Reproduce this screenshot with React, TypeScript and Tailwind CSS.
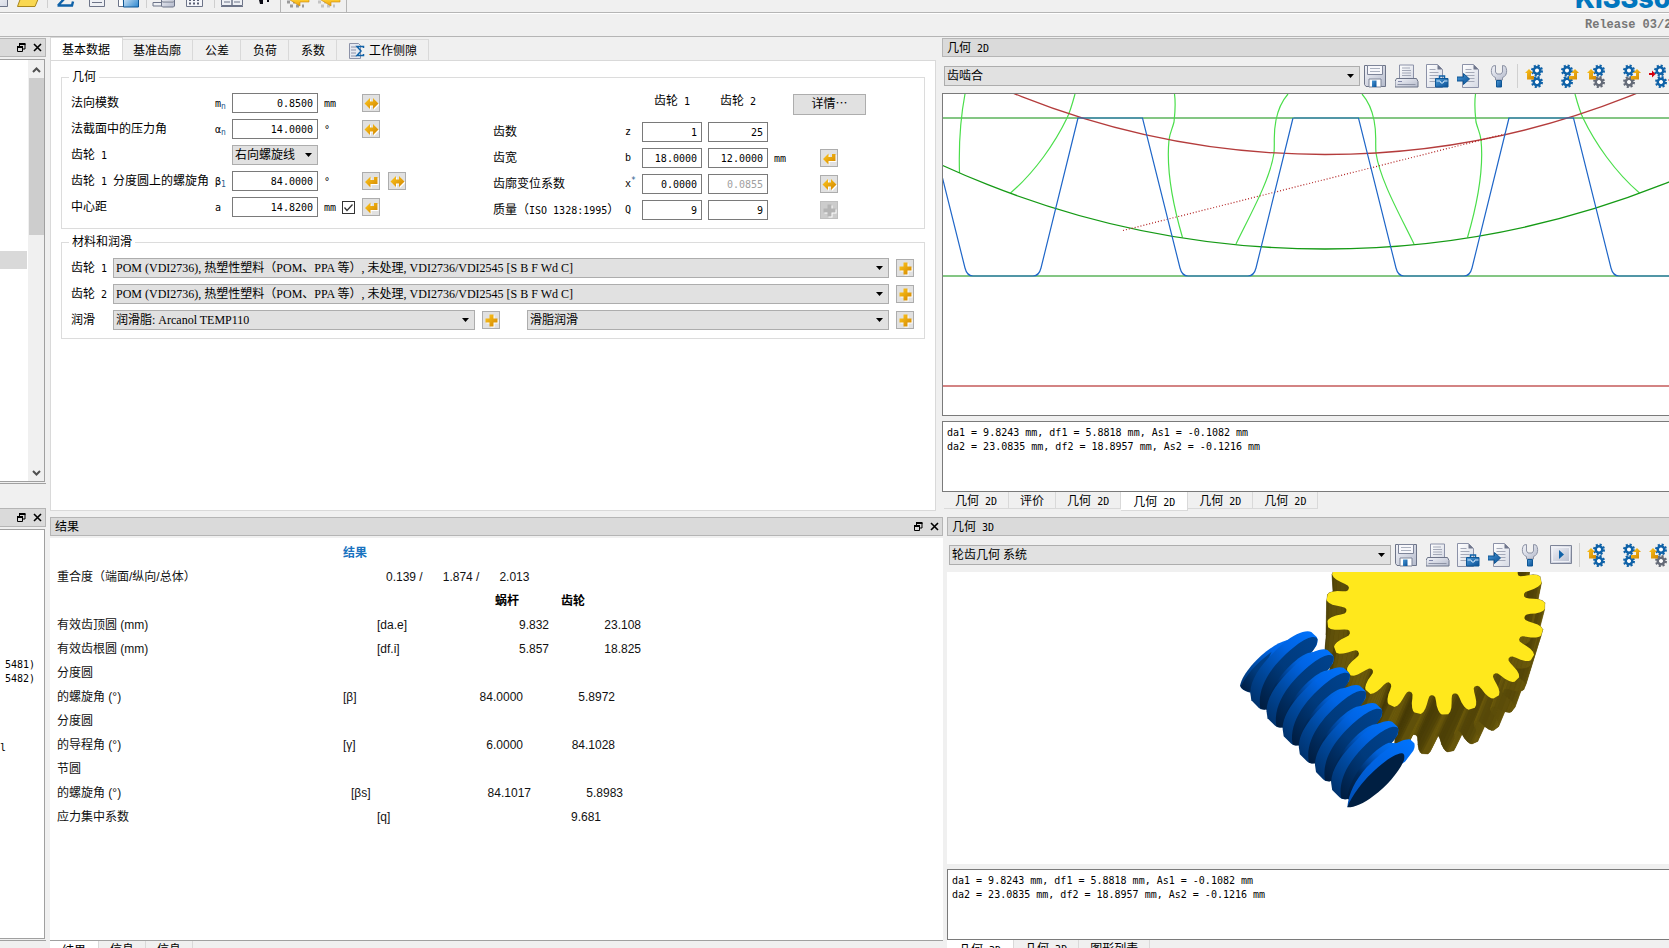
import { ReactNode, useState } from "react";
import clsx from "clsx";

const CJK = "font-['Liberation_Sans','Noto_Sans_CJK_SC',sans-serif]";
const MONO = "font-['DejaVu_Sans_Mono','Noto_Sans_CJK_SC',monospace] text-[10px]";

// ─── Text ─────────────────────────────────────────────────────────────────────

// Latin runs are half the width of a Chinese character
function Txt({ children }: { children: string }) {
  const parts = children.split(/([\x20-\x7e°]+)/).filter(Boolean);
  return (
    <span className="whitespace-pre">
      {parts.map((part, i) =>
        /^[\x20-\x7e°]/.test(part) ? (
          <span key={i} className={MONO}>{part}</span>
        ) : (
          part
        )
      )}
    </span>
  );
}

// ─── Small icons ──────────────────────────────────────────────────────────────

type ButtonIcon = "size" | "return" | "plus" | "plusOff";

const buttonPaths: Record<ButtonIcon, string> = {
  size: "M.5 7.500 6 2v3.500h3V2l5.500 5.500L9 13V9.500H6V13Z",
  return: "M1 8 6.500 2.500V6H10V3h3.500v7h-7v3.500Z",
  plus: "M5.500 1.500h4v4h4v4h-4v4h-4v-4h-4v-4h4Z",
  plusOff: "M5.500 1.500h4v4h4v4h-4v4h-4v-4h-4v-4h4Z",
};

function IconButton({ icon, label }: { icon: ButtonIcon; label: string }) {
  const off = icon === "plusOff";
  return (
    <button
      type="button"
      aria-label={label}
      disabled={off}
      className={clsx(
        "flex size-[18px] shrink-0 items-center justify-center border",
        off ? "border-[#bfbfbf] bg-[#cccccc]" : "border-[#adadad] bg-[#e1e1e1]"
      )}
    >
      <svg viewBox="0 0 15 15" className="size-[15px] shrink-0">
        <path d={buttonPaths[icon]} fill="#fff" transform="translate(1 1)" />
        <path d={buttonPaths[icon]} fill={off ? "#b4b4b4" : "url(#gold)"} />
      </svg>
    </button>
  );
}

function RestoreIcon() {
  return (
    <svg viewBox="0 0 9 9" className="size-[9px]" fill="none" stroke="#000">
      <path d="M2.500 3V1h5.500v5H6" />
      <path d="M2 1h6.500" strokeWidth="2" />
      <path d="M.5 4h5v4.500h-5Z" />
      <path d="M0 4h6" strokeWidth="2" />
    </svg>
  );
}

function CloseIcon() {
  return (
    <svg viewBox="0 0 9 9" className="size-[9px]" stroke="#000" strokeWidth="1.600">
      <path d="M1 1l7 7M8 1 1 8" />
    </svg>
  );
}

// ─── View toolbar icons ───────────────────────────────────────────────────────

function Gear({ x, y, color }: { x: number; y: number; color: string }) {
  return (
    <g transform={`translate(${x} ${y})`}>
      <circle r="4.800" fill="none" stroke={color} strokeWidth="2.400" strokeDasharray="2 1.770" />
      <circle r="3.200" fill="none" stroke={color} strokeWidth="2.600" />
      <circle r="1.800" fill="#fff" />
    </g>
  );
}

const BLUE = "#0f62a8";
const GREY = "#656b78";

function SheetShape() {
  return (
    <>
      <path d="M0 0h11l5 5v18H0Z" fill="url(#paper)" stroke="#8c92a8" />
      <path d="M11 0v5h5Z" fill="#70778c" />
      <path d="M3 5h6M3 8h9M3 11h9M3 14h9M3 17h9" stroke="#a4a9b8" />
    </>
  );
}

const viewIcons: Record<string, ReactNode> = {
  保存: (
    <>
      <path d="M.5 1.500h21v21H2l-1.500-2Z" fill="url(#metal)" stroke="#6d7488" />
      <path d="M3.500 1.500h15v9h-15Z" fill="#f7f7fb" stroke="#7d8498" />
      <path d="M6 4.500h10M6 7.500h10" stroke="#aab0be" />
      <path d="M5 15h12v8H5Z" fill="#fff" stroke="#7d8498" />
      <path d="M8 16.500h4.500V23H8Z" fill="url(#blue)" />
    </>
  ),
  打印: (
    <>
      <path d="M4.500 1h14v14h-14Z" fill="url(#paper)" stroke="#8c92a8" />
      <path d="M7 4h8M7 6.500h9M7 9h9M7 11.500h9" stroke="#a4a9b8" />
      <path d="M1.500 14.500h20l1.500 3v5.500H0v-5.500Z" fill="url(#metal)" stroke="#6d7488" />
      <path d="M3.500 17.500h3" stroke="#222c66" strokeDasharray="1 1" />
      <path d="M2.500 20.500h18" stroke="#8d93a5" />
    </>
  ),
  锁定: (
    <>
      <g transform="translate(.500 .500)"><SheetShape /></g>
      <path d="M13.500 15v-3h5v3" fill="none" stroke="#0f62a8" strokeWidth="1.500" />
      <path d="M9.500 14.500h12.500V23H9.500Z" fill="url(#blue)" stroke="#0f5795" />
      <path d="M10.500 17h3.500l1 2h2l1-2h3.500" fill="none" stroke="#cfe6fa" />
    </>
  ),
  导出: (
    <>
      <g transform="translate(5.500 .500)"><SheetShape /></g>
      <path d="M0 13h6.500V9.500l6 5.500-6 5.500V17H0Z" fill="url(#blue)" stroke="#0f5795" />
    </>
  ),
  设置: (
    <>
      <path d="M5 2C2.500 5 2.500 12 7.500 13.500V16h7v-2.500C19.500 12 19.500 5 17 2l-2.500-.500v6.500l-1.500 2H9L7.500 8V1.500Z" fill="url(#metal)" stroke="#8d93a5" />
      <path d="M8.500 16.500h5v6.500h-5Z" fill="url(#blue)" stroke="#0f5795" />
    </>
  ),
  播放: (
    <>
      <path d="M.5 2.500h21v18H.5Z" fill="url(#metal)" stroke="#7d8498" />
      <path d="M2.500 4.500h17v14h-17Z" fill="none" stroke="#eef0f6" />
      <path d="M9 7l5 4.500-5 4.500Z" fill={BLUE} />
    </>
  ),
  左转: (
    <>
      <Gear x={13} y={6.5} color={BLUE} />
      <Gear x={13} y={18} color={BLUE} />
      <path d="M10 15.500H3V9H1l4-4 4 4H7v3h3Z" fill="url(#gold)" />
    </>
  ),
  右转: (
    <>
      <Gear x={12} y={6.5} color={BLUE} />
      <Gear x={12} y={18} color={BLUE} />
      <path d="M14 15.500h8V9h2l-4-4-4 4h3v3h-5Z" fill="url(#gold)" />
    </>
  ),
  左转一: (
    <>
      <Gear x={13} y={6.5} color={BLUE} />
      <Gear x={13} y={18} color={GREY} />
      <path d="M10 15.500H3V9H1l4-4 4 4H7v3h3Z" fill="url(#gold)" />
    </>
  ),
  右转一: (
    <>
      <Gear x={12} y={6.5} color={BLUE} />
      <Gear x={12} y={18} color={GREY} />
      <path d="M14 15.500h8V9h2l-4-4-4 4h3v3h-5Z" fill="url(#gold)" />
    </>
  ),
  接触: (
    <>
      <Gear x={12} y={6.5} color={BLUE} />
      <Gear x={13} y={18} color={BLUE} />
      <path d="M1 9h3V6.500L7.500 10 4 13.500V11H1ZM24 13v6l-4-3Z" fill="#d4000f" />
    </>
  ),
};

function ViewToolbar({ value, options, play }: { value: string; options: string[]; play?: boolean }) {
  const files = ["保存", "打印", "锁定", "导出", "设置", ...(play ? ["播放"] : [])];
  const gears = ["左转", "右转", "左转一", ...(play ? [] : ["右转一", "接触"])];
  return (
    <div className="flex h-9 shrink-0 items-center overflow-hidden pt-[2px] pl-[2px]">
      <Select label="视图" options={options} value={value} className="min-w-0 flex-1" />
      <div className="ml-1 flex shrink-0 gap-[7px]">
        {files.map((name) => <ViewButton key={name} name={name} />)}
      </div>
      <div className="mr-[6px] ml-[5px] h-6 w-px shrink-0 bg-[#d0d0d0]" />
      <div className="-mr-[3px] flex shrink-0 gap-[7px]">
        {gears.map((name) => <ViewButton key={name} name={name} />)}
      </div>
    </div>
  );
}

function ViewButton({ name }: { name: string }) {
  return (
    <button type="button" aria-label={name} className="size-6 shrink-0">
      <svg viewBox="0 0 24 24" className="size-6">{viewIcons[name]}</svg>
    </button>
  );
}

// ─── Form controls ────────────────────────────────────────────────────────────

interface SelectProps {
  label?: string;
  id?: string;
  value: string;
  options?: string[];
  className?: string;
}

function Select({ label, id, value, options = [value], className }: SelectProps) {
  return (
    <div className={clsx("relative h-5", className)}>
      <select
        id={id}
        aria-label={label}
        defaultValue={value}
        className="block h-5 w-full appearance-none border border-[#adadad] bg-[#e1e1e1] pr-5 pl-[2px] font-['Liberation_Serif','Noto_Sans_CJK_SC',serif] text-[12px] leading-[18px] text-black"
      >
        {options.map((o) => <option key={o}>{o}</option>)}
      </select>
      <svg viewBox="0 0 7 4" className="pointer-events-none absolute top-2 right-[6px] h-1 w-[7px]">
        <path d="M0 0h7L3.500 4Z" />
      </svg>
    </div>
  );
}

function NumberInput({ id, value, label, disabled }: { id: string; value: string; label?: string; disabled?: boolean }) {
  return (
    <input
      id={id}
      aria-label={label}
      type="text"
      inputMode="decimal"
      defaultValue={value}
      disabled={disabled}
      className={clsx(
        MONO,
        "h-5 min-w-0 border border-[#7a7a7a] bg-white pr-1 text-right",
        disabled ? "text-[#a0a0a0]" : "text-black"
      )}
    />
  );
}

function Symbol({ base, sub, sup }: { base: string; sub?: string; sup?: string }) {
  return (
    <span className={clsx(MONO, "whitespace-nowrap")}>
      {base}
      {sub && <sub className="text-[8px] text-[#2a5a8a]">{sub}</sub>}
      {sup && <sup className="text-[8px] text-[#2a5a8a]">{sup}</sup>}
    </span>
  );
}

// ─── Docks and tabs ───────────────────────────────────────────────────────────

function DockTitle({ title, buttons }: { title?: string; buttons?: boolean }) {
  return (
    <div
      className={clsx(
        "flex h-[19px] shrink-0 items-center justify-between border border-[#b5b5b5] bg-[#dadada] pl-1",
        !buttons && "border-r-0"
      )}
    >
      <h2 className="pt-[2px] leading-[15px]">{title && <Txt>{title}</Txt>}</h2>
      {buttons && (
        <div className="mr-[3px] flex gap-[7px]">
          <button type="button" aria-label="还原"><RestoreIcon /></button>
          <button type="button" aria-label="关闭"><CloseIcon /></button>
        </div>
      )}
    </div>
  );
}

function BottomTabs({ tabs, initial }: { tabs: string[]; initial: number }) {
  const [active, setActive] = useState(initial);
  return (
    <div className="flex items-start" role="tablist">
      {tabs.map((t, i) => (
        <button
          key={i}
          type="button"
          role="tab"
          aria-selected={i === active}
          onClick={() => setActive(i)}
          className={clsx(
            "border-r border-b border-[#d9d9d9]",
            i === active ? "h-[19px] bg-white px-3 pt-[2px]" : "h-[17px] bg-[#f0f0f0] px-[11px] pt-px"
          )}
        >
          <Txt>{t}</Txt>
        </button>
      ))}
    </div>
  );
}

function Report() {
  return (
    <div className="h-[71px] shrink-0 border border-r-0 border-[#7a7a7a] bg-white pt-[3px] pl-1 leading-[14px]">
      <p className="h-[14px]"><Txt>da1 = 9.8243 mm, df1 = 5.8818 mm, As1 = -0.1082 mm</Txt></p>
      <p className="h-[14px]"><Txt>da2 = 23.0835 mm, df2 = 18.8957 mm, As2 = -0.1216 mm</Txt></p>
    </div>
  );
}

// ─── Main toolbar ─────────────────────────────────────────────────────────────

// Only the lower 8 pixels of the toolbar icons are on screen
const mainIcons: Record<string, ReactNode> = {
  新建: <path d="M4-8h18.500V6.500H4" fill="url(#paper)" stroke="#6d7488" />,
  打开: <path d="M1.500 6.500 5-3h18l-4 9.500Z" fill="#f9d750" stroke="#a8851c" />,
  计算: <path d="M5 5.500 12-2M4.500 5.500h14.500l1-4" fill="none" stroke={BLUE} strokeWidth="2.400" />,
  报告: <path d="M5.500-8h15V6.500h-15ZM8-.500h10M8 2.500h10" fill="#eef0f4" stroke="#6d7488" />,
  窗口: (
    <>
      <path d="M3.500-8v14.500H9" fill="#fff" stroke="#6d7488" />
      <path d="M8.500-8h15V7h-15Z" fill="url(#blueSoft)" stroke="#0f5795" />
    </>
  ),
  数据库: (
    <>
      <path d="M2-.500h8M1 2.500h9v3.500H1Z" fill="#eef0f4" stroke="#6d7488" />
      <path d="M9.500-6h13V6l-1 1h-11l-1-1ZM9.500 1l1 1h11l1-1" fill="url(#metal)" stroke="#6d7488" />
    </>
  ),
  计算器: (
    <>
      <path d="M3.500-8h16V6.500h-16Z" fill="#f4f5f9" stroke="#6d7488" />
      <path d="M6 0h12M6 3.500h12" stroke="#5a6074" strokeWidth="2" strokeDasharray="2 2" />
    </>
  ),
  手册: <path d="M1.500-8H12V5.500H1.500ZM12-8h10.500v13.500H12ZM4-1h6M4 2h6M14-1h6M14 2h6M1 6.500h22" fill="#eef0f4" stroke="#6d7488" />,
  帮助: <path d="M8 0h4v4h-3ZM16 0h2v2h-2Z" fill="#0a0a14" />,
};

function arrowIcon(scatter: boolean) {
  return (
    <>
      <path d="M1 2h8M4 6h14" stroke={scatter ? "#c4c4c4" : "#9a9a9a"} strokeWidth="3" strokeDasharray="3 3" />
      <path d="M4 0 4.500-1 23-1V2H14v4Z" fill="url(#goldBar)" stroke="#c98a0a" strokeWidth=".6" />
    </>
  );
}

function MainButton({ name, children }: { name: string; children: ReactNode }) {
  return (
    <button type="button" aria-label={name} className="h-2 w-6 shrink-0">
      <svg viewBox="0 0 24 8" className="h-2 w-6">{children}</svg>
    </button>
  );
}

function MainToolbar() {
  const groups = [["新建", "打开"], ["计算", "报告", "窗口"], ["数据库", "计算器"], ["手册", "帮助"]];
  return (
    <header className="shrink-0 overflow-hidden">
      <div className="flex h-[13px] items-start border-b border-[#b5b5b5]">
        <div className="-ml-[15px] flex">
          {groups.map((group, i) => (
            <div key={i} className="flex">
              {i > 0 && <div className="mr-[5px] ml-[7px] h-2 w-px bg-[#cfcfcf]" />}
              <div className="flex gap-[7px]">
                {group.map((name) => <MainButton key={name} name={name}>{mainIcons[name]}</MainButton>)}
              </div>
            </div>
          ))}
        </div>
        <div className="ml-[5px] flex h-3 gap-[7px] border-x border-[#b5b5b5] px-[5px]">
          <MainButton name="撤销">{arrowIcon(false)}</MainButton>
          <MainButton name="重做">{arrowIcon(true)}</MainButton>
        </div>
        <div className="ml-auto flex h-2 w-[94px] items-end overflow-hidden font-['Inter'] text-[27px] leading-[18px] font-extrabold text-[#0076be]">
          <span>KISSsoft</span>
        </div>
      </div>
      <div className="flex h-6 items-center justify-end overflow-hidden border-t border-b border-t-white border-b-[#b5b5b5]">
        <span className="w-[84px] font-['Liberation_Mono'] text-[12px] font-bold whitespace-nowrap text-[#777777]">Release 03/2</span>
      </div>
    </header>
  );
}

// ─── Basic data page ──────────────────────────────────────────────────────────

function PageTabs() {
  const tabs = ["基本数据", "基准齿廓", "公差", "负荷", "系数", "工作侧隙"];
  return (
    <div role="tablist" className="-mb-px flex h-6 shrink-0 items-end">
      {tabs.map((t, i) => (
        <button
          key={t}
          type="button"
          role="tab"
          aria-selected={i === 0}
          className={clsx(
            "flex items-center gap-1 border-t border-r border-[#d9d9d9]",
            i === 0 ? "h-6 border-l bg-white pr-3 pl-[11px]" : "h-[22px] border-b bg-[#f0f0f0] pt-px pr-[11px]",
            i === 1 && "pl-[10px]",
            i > 1 && "pl-3"
          )}
        >
          {i === 5 && (
            <svg viewBox="0 0 16 16" className="size-4">
              <path d="M.5.5h9l2 2V15.500H.5Z" fill="#e6e9f1" stroke="#8c92a8" />
              <path d="M2 4h6M2 7h5M2 10h5M2 13h6" stroke="#8c92a8" />
              <path d="M14.500 5V3.500H8l4 4.500-4 4.500h6.500V11" fill="none" stroke={BLUE} strokeWidth="1.500" />
            </svg>
          )}
          {t}
        </button>
      ))}
    </div>
  );
}

interface LeftRow {
  id: string;
  label: string;
  base?: string;
  sub?: string;
  value: string;
  unit?: string;
  icons: ButtonIcon[];
  check?: boolean;
}

const leftRows: LeftRow[] = [
  { id: "mn", label: "法向模数", base: "m", sub: "n", value: "0.8500", unit: "mm", icons: ["size"] },
  { id: "alpha", label: "法截面中的压力角", base: "α", sub: "n", value: "14.0000", unit: "°", icons: ["size"] },
  { id: "helix", label: "齿轮 1", value: "右向螺旋线", icons: [] },
  { id: "beta", label: "齿轮 1 分度圆上的螺旋角", base: "β", sub: "1", value: "84.0000", unit: "°", icons: ["return", "size"] },
  { id: "a", label: "中心距", base: "a", value: "14.8200", unit: "mm", icons: ["return"], check: true },
];

const rightRows = [
  { id: "z", label: "齿数", base: "z", values: ["1", "25"] },
  { id: "b", label: "齿宽", base: "b", values: ["18.0000", "12.0000"], unit: "mm", icon: "return" as ButtonIcon },
  { id: "x", label: "齿廓变位系数", base: "x", sup: "*", values: ["0.0000", "0.0855"], icon: "size" as ButtonIcon },
  { id: "q", label: "质量（ISO 1328:1995）", base: "Q", values: ["9", "9"], icon: "plusOff" as ButtonIcon },
];

function GeometryGroup() {
  return (
    <fieldset className="border border-[#dcdcdc] px-[7px] pb-2">
      <legend className="h-4 px-[3px] leading-4">几何</legend>
      <div className="flex gap-[87px] pt-2 pl-[2px]">
        <div className="flex shrink-0 flex-col gap-[6px]">
          {leftRows.map((r) => (
            <div key={r.id} className="grid h-5 grid-cols-[144px_17px_86px_24px_20px_26px_18px] items-center">
              <label htmlFor={r.id}><Txt>{r.label}</Txt></label>
              <span>{r.base && <Symbol base={r.base} sub={r.sub} />}</span>
              {r.base ? (
                <NumberInput id={r.id} value={r.value} />
              ) : (
                <Select id={r.id} value={r.value} options={["右向螺旋线", "左向螺旋线"]} />
              )}
              <span className="pl-[6px]">{r.unit && <Txt>{r.unit}</Txt>}</span>
              {r.check ? (
                <label className="relative block size-[13px]">
                  <input type="checkbox" defaultChecked aria-label="固定中心距" className="peer block size-[13px] appearance-none border border-[#333] bg-white" />
                  <svg viewBox="0 0 13 13" className="pointer-events-none absolute inset-0 hidden size-[13px] peer-checked:block">
                    <path d="M2.500 6.500 5 9.500l5.500-6" fill="none" stroke="#333" strokeWidth="1.300" />
                  </svg>
                </label>
              ) : (
                <span />
              )}
              {r.icons.map((icon) => <IconButton key={icon} icon={icon} label={`${r.label} ${icon}`} />)}
            </div>
          ))}
        </div>
        <div className="flex flex-col gap-[6px]">
          <div className="grid h-[23px] grid-cols-[132px_17px_66px_60px_25px_73px]">
            <span className="col-start-3 pl-3 leading-4"><Txt>齿轮 1</Txt></span>
            <span className="pl-3 leading-4"><Txt>齿轮 2</Txt></span>
            <button type="button" className="col-start-6 mt-px h-[21px] border border-[#adadad] bg-[#e1e1e1] leading-[19px]">详情⋯</button>
          </div>
          {rightRows.map((r) => (
            <div key={r.id} className="grid h-5 grid-cols-[132px_17px_60px_66px_52px_18px] items-center">
              <label htmlFor={`${r.id}1`} className="whitespace-nowrap"><Txt>{r.label}</Txt></label>
              <Symbol base={r.base} sup={r.sup} />
              <NumberInput id={`${r.id}1`} value={r.values[0]} />
              <div className="flex pl-[6px]">
                <NumberInput id={`${r.id}2`} label={`${r.label} 齿轮 2`} value={r.values[1]} disabled={r.id === "x"} />
              </div>
              <span className="pl-[6px]">{r.unit && <Txt>{r.unit}</Txt>}</span>
              {r.icon && <IconButton icon={r.icon} label={`${r.label} ${r.icon}`} />}
            </div>
          ))}
        </div>
      </div>
    </fieldset>
  );
}

const POM = "POM (VDI2736), 热塑性塑料（POM、PPA 等）, 未处理, VDI2736/VDI2545 [S B F Wd C]";

function MaterialGroup() {
  return (
    <fieldset className="mt-[5px] border border-[#dcdcdc] px-[7px] pb-2">
      <legend className="h-4 px-[3px] leading-4">材料和润滑</legend>
      <div className="flex flex-col gap-[6px] pt-2 pr-[3px] pl-[2px]">
        {["齿轮 1", "齿轮 2"].map((name, i) => (
          <div key={name} className="flex items-center">
            <label htmlFor={`mat${i}`} className="w-[42px] shrink-0"><Txt>{name}</Txt></label>
            <Select id={`mat${i}`} value={POM} className="min-w-0 flex-1" />
            <div className="ml-[7px]"><IconButton icon="plus" label={`${name} 材料`} /></div>
          </div>
        ))}
        <div className="flex items-center">
          <label htmlFor="lub" className="w-[42px] shrink-0">润滑</label>
          <Select id="lub" value="润滑脂: Arcanol TEMP110" className="min-w-0 flex-1" />
          <div className="mr-[27px] ml-[7px]"><IconButton icon="plus" label="润滑剂" /></div>
          <Select label="润滑方式" value="滑脂润滑" className="min-w-0 flex-1" />
          <div className="ml-[7px]"><IconButton icon="plus" label="润滑方式设置" /></div>
        </div>
      </div>
    </fieldset>
  );
}

// ─── Results ──────────────────────────────────────────────────────────────────

interface ResultRow {
  label: string;
  symbol?: string;
  v1?: string;
  v2?: string;
  indent?: "none" | "small" | "large" | "single";
}

const resultRows: ResultRow[] = [
  { label: "有效齿顶圆 (mm)", symbol: "[da.e]", v1: "9.832", v2: "23.108", indent: "large" },
  { label: "有效齿根圆 (mm)", symbol: "[df.i]", v1: "5.857", v2: "18.825", indent: "large" },
  { label: "分度圆" },
  { label: "的螺旋角 (°)", symbol: "[β]", v1: "84.0000", v2: "5.8972" },
  { label: "分度圆" },
  { label: "的导程角 (°)", symbol: "[γ]", v1: "6.0000", v2: "84.1028" },
  { label: "节圆" },
  { label: "的螺旋角 (°)", symbol: "[βs]", v1: "84.1017", v2: "5.8983", indent: "small" },
  { label: "应力集中系数", symbol: "[q]", v2: "9.681", indent: "single" },
];

const symbolPad = { none: "", small: "pl-2", large: "pl-[34px]", single: "pl-[34px]" };
const valuePad = { none: "pr-[26px]", small: "pr-[18px]", large: "", single: "pr-10" };

function Results() {
  return (
    <div className="min-h-0 flex-1 overflow-hidden bg-white pt-[3px] pl-[7px] text-[#111]">
      <table className="w-[584px] table-fixed border-collapse text-left">
        <colgroup>
          <col className="w-[286px]" />
          <col className="w-[84px]" />
          <col className="w-[122px]" />
          <col className="w-[92px]" />
        </colgroup>
        <tbody>
          <tr className="h-6">
            <td />
            <th colSpan={3} className="p-0 font-bold text-[#1a73c0]">结果</th>
          </tr>
          <tr className="h-6">
            <td className="p-0">重合度（端面/纵向/总体）</td>
            <td colSpan={3} className="p-0 pl-[43px]">
              <div className="flex gap-5 whitespace-nowrap">
                <span>0.139 /</span>
                <span>1.874 /</span>
                <span>2.013</span>
              </div>
            </td>
          </tr>
          <tr className="h-6 text-black">
            <td />
            <td />
            <th className="p-0 pr-[30px] text-right font-bold">蜗杆</th>
            <th className="p-0 pl-3 font-bold">齿轮</th>
          </tr>
          {resultRows.map((r, i) => {
            const indent = r.indent ?? "none";
            return (
              <tr key={i} className="h-6">
                <td className="p-0">{r.label}</td>
                <td className={clsx("py-0", symbolPad[indent])}>{r.symbol}</td>
                <td className={clsx("py-0 text-right", valuePad[indent])}>{r.v1}</td>
                <td className={clsx("py-0 text-right", valuePad[indent])}>{r.v2}</td>
              </tr>
            );
          })}
        </tbody>
      </table>
    </div>
  );
}

// ─── 2D view ──────────────────────────────────────────────────────────────────

function Flanks() {
  return (
    <g fill="none" stroke="#4ade4a" strokeWidth="1.200">
      <path d="M22 0C18 21 15.500 46 16.500 79" />
      <path d="M132 0C129 11 127 18 124 24C112 49 92 78 67.500 99" />
      <path d="M231.500 0C233 11 232 19 231 28C229 36 227 38 226 46C223 76 230 111 239.500 143.500" />
      <path d="M345 0C338 8 335 16 333 26C330 41 332 46 331 59C327 86 307 121 293 150" />
    </g>
  );
}

function Canvas2D() {
  return (
    <div className="min-h-0 flex-1 overflow-hidden border border-r-0 border-[#7a7a7a] bg-white">
      <svg className="block size-full">
        <path d="M0 24H4000M0 182H4000" stroke="#5cb45c" strokeWidth="1.500" />
        <path d="M0 292H4000" stroke="#c45a5a" strokeWidth="1.500" />
        <Flanks />
        <g transform="translate(764 0) scale(-1 1)"><Flanks /></g>
        <circle cx="382" cy="-761" r="916" fill="none" stroke="#159a15" strokeWidth="1.300" />
        <circle cx="382" cy="-763.500" r="824" fill="none" stroke="#b43c3c" strokeWidth="1.300" />
        <path d="M180 136.500 562 40" stroke="#b02020" strokeWidth="1.200" strokeDasharray="1 2" />
        <g fill="none" stroke="#1f66c8" strokeWidth="1.200">
          {[-215, 0, 216, 431, 647].map((x) => (
            <path key={x} transform={`translate(${x} 0)`} d="M134.500 24H199.500L237 174Q239 182 245 182H305Q311 182 313 174L350 24" />
          ))}
        </g>
      </svg>
    </div>
  );
}

// ─── 3D view ──────────────────────────────────────────────────────────────────

type Point = [number, number];

const toothProfile: Point[] = [
  [268, -7.2], [269, -6.2], [274, -5.3], [285, -4.8], [300, -4.4], [314, -3.6], [323, -2.7], [327, -1.8],
  [328, 1.6], [321, 2.8], [310, 3.7], [296, 4.3], [282, 4.8], [272, 5.4], [268, 6.4],
];

function gearOutline(cx: number, cy: number, scale: number, phase: number): Point[] {
  const points: Point[] = [];
  for (let k = 0; k < 25; k++) {
    for (const [r, offset] of toothProfile) {
      const a = ((phase + k * 14.4 + offset) * Math.PI) / 180;
      points.push([cx + r * scale * Math.sin(a), cy + r * scale * 0.975 * Math.cos(a)]);
    }
  }
  return points;
}

function toPoints(points: Point[]) {
  return points.map((p) => `${p[0].toFixed(1)},${p[1].toFixed(1)}`).join(" ");
}

const frontFace = gearOutline(707, 235, 1, 5);
const backFace = gearOutline(683, 370, 0.945, -1.5);

function GearWheel() {
  return (
    <g>
      <polygon points={toPoints(backFace)} fill="#4e4207" />
      {frontFace.map((p, i) => {
        const j = (i + 1) % frontFace.length;
        const q = frontFace[j];
        const nx = q[1] - p[1];
        const ny = p[0] - q[0];
        const len = Math.hypot(nx, ny) || 1;
        // walls are lit from the lower right
        const light = 0.5 + 0.5 * ((-nx * 0.75 - ny * 0.5) / len);
        const fill = `rgb(${Math.round(66 + light * 44)},${Math.round(55 + light * 37)},${Math.round(5 + light * 7)})`;
        return <polygon key={i} points={toPoints([p, q, backFace[j], backFace[i]])} fill={fill} stroke={fill} />;
      })}
      <polygon points={toPoints(frontFace)} fill="#ffe81c" />
    </g>
  );
}

function Thread({ k, last }: { k: number; last?: boolean }) {
  return (
    <g transform={`translate(${k * 48.500} ${k * 53.800})`}>
      <path d="M151 490C150 440 200 384 250 340C285 310 318 299 334 306L350 321Q355 330 350 346L200 537Q185 542 176 533L154 511Z" fill="url(#crest)" />
      <path d="M353 328C348 316 325 318 290 345C228 392 168 465 181 535Q190 541 200 538C228 470 275 410 327 376Q352 352 353 328Z" fill="url(#flank)" />
      <path
        d={last ? "M324 369C280 385 205 465 199 538L206 540L376 420L372 372Z" : "M324 369C280 385 205 465 199 538L210 560L250 570L376 420L372 360Z"}
        fill="url(#core)"
      />
    </g>
  );
}

function Worm() {
  return (
    <g>
      <path d="M120 467C130 420 205 345 262 330L300 325L200 500L146 487Q124 480 120 467Z" fill="url(#crest)" />
      <path d="M122 470C145 420 190 385 215 365L180 440L150 486Q130 482 122 470Z" fill="url(#flank)" />
      {[0, 1, 2, 3, 4, 5].map((k) => <Thread key={k} k={k} last={k === 5} />)}
      <path d="M442 832C446 790 465 752 500 712C545 665 600 625 630 628L643 640Q646 652 640 662Q630 675 615 695L600 705Z" fill="url(#crestEnd)" />
      <path d="M442 832C448 815 460 795 475 775C520 715 580 672 604 670Q616 668 612 690C600 722 560 770 520 798C490 822 460 833 442 832Z" fill="#001f42" />
    </g>
  );
}

function Canvas3D() {
  return (
    <div className="min-h-0 flex-1 overflow-hidden bg-white">
      <svg className="block size-full">
        <g transform="translate(253 -42) scale(.33333)">
          <GearWheel />
          <Worm />
        </g>
      </svg>
    </div>
  );
}

// ─── Shared gradients ─────────────────────────────────────────────────────────

function Gradients() {
  const stops: [string, string[], number[]][] = [
    ["gold", ["#ffc81e", "#d08400"], [0, 0, 1, 1]],
    ["goldBar", ["#ffd23a", "#f0a000"], [0, 0, 0, 1]],
    ["paper", ["#ffffff", "#d5d9e4"], [0, 0, 1, 1]],
    ["metal", ["#f4f5fa", "#b4bacb"], [0, 0, 1, 1]],
    ["blue", ["#4b9ad8", "#0a4f94"], [0, 0, 1, 1]],
    ["blueSoft", ["#ffffff", "#2a86cf"], [0, 0, 1, 1]],
    ["crest", ["#0074ff", "#0064e4", "#00479a", "#002d62"], [1, 0, 0, 1]],
    ["crestEnd", ["#0074ff", "#0062e0", "#004db0"], [1, 0, 0, 1]],
    ["flank", ["#00438f", "#003a7c", "#001b3d"], [1, 0, 0, 1]],
    ["core", ["#0078ff", "#0060d8", "#002a5c", "#001a3a"], [1, 0, 0, 1]],
  ];
  return (
    <svg className="absolute size-0" aria-hidden="true">
      <defs>
        {stops.map(([id, colors, [x1, y1, x2, y2]]) => (
          <linearGradient key={id} id={id} x1={x1} y1={y1} x2={x2} y2={y2}>
            {colors.map((c, i) => <stop key={c} offset={i / (colors.length - 1)} stopColor={c} />)}
          </linearGradient>
        ))}
      </defs>
    </svg>
  );
}

// ─── Layout ───────────────────────────────────────────────────────────────────

function LeftDocks() {
  return (
    <aside className="flex w-[46px] shrink-0 flex-col pt-px">
      <div className="-ml-px flex h-[446px] shrink-0 flex-col border-b border-[#a0a0a0]">
        <DockTitle buttons />
        <div className="mt-[2px] mr-px mb-px flex flex-1 justify-between border border-[#a0a0a0] bg-white">
          <div className="mt-[191px] h-[18px] flex-1 bg-[#d9d9d9]" />
          <div className="ml-px flex w-4 flex-col items-center bg-[#f0f0f0]">
            <svg viewBox="0 0 15 18" className="h-[18px] w-[15px]" fill="none" stroke="#505050" strokeWidth="2">
              <path d="M4 12l3.500-3.500L11 12" />
            </svg>
            <div className="h-[157px] w-[15px] bg-[#cdcdcd]" />
            <svg viewBox="0 0 15 18" className="mt-auto h-[18px] w-[15px]" fill="none" stroke="#505050" strokeWidth="2">
              <path d="M4 8l3.500 3.500L11 8" />
            </svg>
          </div>
        </div>
      </div>
      <div className="mt-6 mb-[7px] -ml-px flex min-h-0 flex-1 flex-col border-b border-[#a0a0a0]">
        <DockTitle buttons />
        <div className="mt-[2px] mr-px mb-px min-h-0 flex-1 overflow-hidden border border-[#a0a0a0] bg-white pt-[127px] leading-[14px]">
          <p className="h-[14px] pl-[5px]"><Txt>5481)</Txt></p>
          <p className="h-[14px] pl-[5px]"><Txt>5482)</Txt></p>
          <p className="pt-[55px]"><Txt>l</Txt></p>
        </div>
      </div>
    </aside>
  );
}

export default function App() {
  return (
    <div className={clsx(CJK, "flex h-screen flex-col overflow-hidden bg-[#f0f0f0] text-[12px] leading-4 text-black")}>
      <Gradients />
      <MainToolbar />
      <div className="flex min-h-0 flex-1">
        <LeftDocks />
        <main className="ml-1 flex min-w-0 flex-1 flex-col">
          <div className="flex h-[474px] shrink-0 gap-[6px]">
            <section className="flex min-w-0 flex-[886] flex-col">
              <PageTabs />
              <div className="flex-1 border border-[#d9d9d9] bg-white px-[10px] pt-2">
                <GeometryGroup />
                <MaterialGroup />
              </div>
            </section>
            <section className="flex min-w-0 flex-[727] flex-col pt-px">
              <DockTitle title="几何 2D" />
              <ViewToolbar value="齿啮合" options={["齿啮合"]} />
              <Canvas2D />
              <div className="h-[5px] shrink-0" />
              <Report />
              <div className="h-[19px] shrink-0 pl-[2px]">
                <BottomTabs tabs={["几何 2D", "评价", "几何 2D", "几何 2D", "几何 2D", "几何 2D"]} initial={3} />
              </div>
            </section>
          </div>
          <div className="mt-[6px] flex min-h-0 flex-1 gap-1">
            <section className="flex min-w-0 flex-[893] flex-col">
              <DockTitle title="结果" buttons />
              <div className="h-[2px] shrink-0" />
              <Results />
              <div className="h-2 shrink-0 overflow-hidden border-t border-[#a0a0a0]">
                <BottomTabs tabs={["结果", "信息", "信息"]} initial={0} />
              </div>
            </section>
            <section className="flex min-w-0 flex-[722] flex-col">
              <DockTitle title="几何 3D" />
              <ViewToolbar value="轮齿几何 系统" options={["轮齿几何 系统"]} play />
              <Canvas3D />
              <div className="h-[5px] shrink-0" />
              <Report />
              <div className="h-2 shrink-0 overflow-hidden">
                <BottomTabs tabs={["几何 3D", "几何 3D", "图形列表"]} initial={0} />
              </div>
            </section>
          </div>
        </main>
      </div>
    </div>
  );
}
